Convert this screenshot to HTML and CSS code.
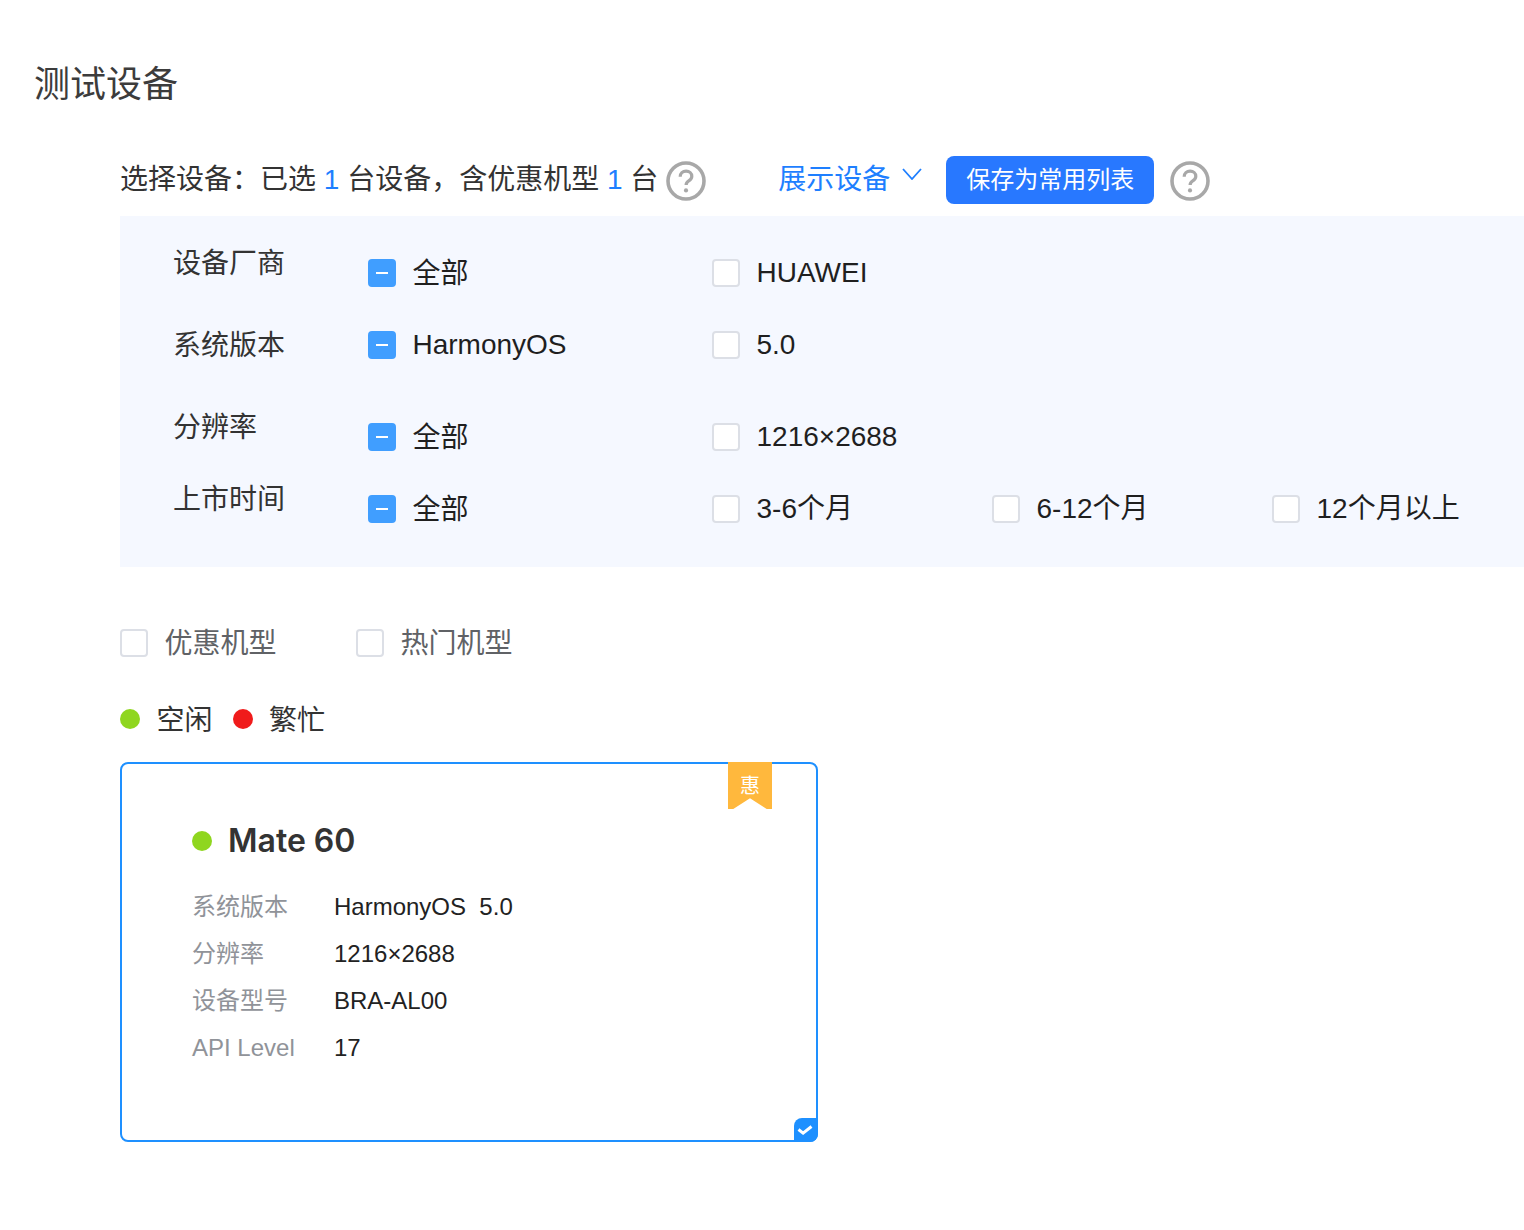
FILE: index.html
```html
<!DOCTYPE html>
<html lang="zh-CN">
<head>
    <meta charset="UTF-8">
    <meta name="viewport" content="width=device-width, initial-scale=1.0">
    <title>测试设备</title>
    <link rel="stylesheet" href="styles.css">
</head>
<body>

    <div class="page">
        <h1 class="page-title">测试设备</h1>

        <div class="device-section">
            <div class="toolbar">
                <span class="summary">选择设备：已选 <em>1</em> 台设备，含优惠机型 <em>1</em> 台</span>
                <svg class="help-icon" viewBox="0 0 40 40"><circle cx="20" cy="20" r="18" fill="none" stroke="#a8a8a8" stroke-width="3.6"/><path d="M14.2 15.8c0-3.4 2.5-5.6 5.9-5.6s5.7 2.1 5.7 5c0 2.3-1.3 3.5-3 4.6-1.7 1.2-2.7 2.2-2.7 4.2" fill="none" stroke="#a8a8a8" stroke-width="3.2"/><circle cx="20" cy="29.4" r="2.1" fill="#a8a8a8"/></svg>
                <span class="show-devices">展示设备</span>
                <svg class="chevron" viewBox="0 0 20 12"><path d="M1 1l9 10 9-10" fill="none" stroke="#1e7fff" stroke-width="1.8"/></svg>
                <button class="btn-save">保存为常用列表</button>
                <svg class="help-icon help-last" viewBox="0 0 40 40"><circle cx="20" cy="20" r="18" fill="none" stroke="#a8a8a8" stroke-width="3.6"/><path d="M14.2 15.8c0-3.4 2.5-5.6 5.9-5.6s5.7 2.1 5.7 5c0 2.3-1.3 3.5-3 4.6-1.7 1.2-2.7 2.2-2.7 4.2" fill="none" stroke="#a8a8a8" stroke-width="3.2"/><circle cx="20" cy="29.4" r="2.1" fill="#a8a8a8"/></svg>
            </div>

            <div class="filter-panel">
                <div class="filter-row offset">
                    <div class="filter-label">设备厂商</div>
                    <div class="option first"><span class="check mixed"></span><span class="cjk">全部</span></div>
                    <div class="option"><span class="check"></span>HUAWEI</div>
                </div>
                <div class="filter-row">
                    <div class="filter-label">系统版本</div>
                    <div class="option first"><span class="check mixed"></span>HarmonyOS</div>
                    <div class="option"><span class="check"></span>5.0</div>
                </div>
                <div class="filter-row short offset">
                    <div class="filter-label">分辨率</div>
                    <div class="option first"><span class="check mixed"></span><span class="cjk">全部</span></div>
                    <div class="option"><span class="check"></span>1216×2688</div>
                </div>
                <div class="filter-row last offset">
                    <div class="filter-label">上市时间</div>
                    <div class="option first"><span class="check mixed"></span><span class="cjk">全部</span></div>
                    <div class="option"><span class="check"></span>3-6个月</div>
                    <div class="option"><span class="check"></span>6-12个月</div>
                    <div class="option"><span class="check"></span>12个月以上</div>
                </div>
            </div>

            <div class="quick-filters">
                <div class="option quick"><span class="check"></span><span class="cjk">优惠机型</span></div>
                <div class="option quick"><span class="check"></span><span class="cjk">热门机型</span></div>
            </div>

            <div class="legend">
                <span class="dot free"></span><span class="legend-text">空闲</span>
                <span class="dot busy"></span><span class="legend-text">繁忙</span>
            </div>

            <div class="device-card">
                <div class="ribbon">惠</div>
                <div class="device-name"><span class="dot free"></span>Mate 60</div>
                <div class="spec"><span class="spec-key">系统版本</span><span class="spec-value">HarmonyOS&nbsp; 5.0</span></div>
                <div class="spec"><span class="spec-key">分辨率</span><span class="spec-value">1216×2688</span></div>
                <div class="spec"><span class="spec-key">设备型号</span><span class="spec-value">BRA-AL00</span></div>
                <div class="spec"><span class="spec-key">API Level</span><span class="spec-value">17</span></div>
                <div class="card-check">
                    <svg viewBox="0 0 24 24"><path d="M4.5 11.5l4.6 3.6 8.4-6.6" fill="none" stroke="#fff" stroke-width="3"/></svg>
                </div>
            </div>
        </div>
    </div>

</body>
</html>
```

FILE: styles.css
```css
/* General */
html, body {
    margin: 0;
    padding: 0;
    background: #fff;
}

body {
    font-family: "Liberation Sans", "Noto Sans CJK SC", sans-serif;
    font-size: 28px;
    line-height: 40px;
    color: #333;
    overflow-x: hidden;
}

.page {
    height: 1230px;
    padding-top: 60px;
    box-sizing: border-box;
}

.page-title {
    margin: 0 0 46px 34px;
    font-size: 36px;
    line-height: 50px;
    font-weight: 400;
    color: #3c3c3c;
}

.device-section {
    margin-left: 120px;
}

/* Toolbar */
.toolbar {
    display: flex;
    align-items: flex-start;
    height: 60px;
    line-height: 48px;
}

.summary em {
    font-style: normal;
    color: #1e7fff;
}

.help-icon {
    width: 40px;
    height: 40px;
    margin: 5px 0 0 8px;
    flex-shrink: 0;
}

.help-last {
    margin-left: 16px;
}

.show-devices {
    margin-left: 72px;
    color: #1e7fff;
}

.chevron {
    width: 20px;
    height: 12px;
    margin: 12px 24px 0 12px;
}

.btn-save {
    width: 208px;
    height: 48px;
    padding: 0;
    border: none;
    border-radius: 8px;
    background-color: #2878ff;
    color: #fff;
    font-family: inherit;
    font-size: 24px;
    line-height: 48px;
}

/* Filter panel */
.filter-panel {
    padding: 27px 0 0 53px;
    background-color: #f5f8ff;
    height: 351px;
    box-sizing: border-box;
}

.filter-row {
    display: flex;
    align-items: flex-start;
    height: 82px;
}

.filter-row.short {
    height: 72px;
}

.filter-row.last {
    height: 70px;
}

.filter-row.offset .option {
    margin-top: 10px;
}

.filter-label {
    width: 195px;
    flex-shrink: 0;
    line-height: 42px;
}

.option {
    display: flex;
    align-items: center;
    width: 280px;
    height: 40px;
    flex-shrink: 0;
    color: #1f1f1f;
}

.option.first {
    width: 344px;
}

/* chinese-only labels sit a little high otherwise */
.cjk {
    padding-top: 2px;
}

.check {
    position: relative;
    width: 28px;
    height: 28px;
    margin-right: 16.5px;
    border: 2px solid #dcdfe6;
    border-radius: 4px;
    background-color: #fff;
    box-sizing: border-box;
    flex-shrink: 0;
}

.check.mixed {
    border-color: #409eff;
    background-color: #409eff;
}

.check.mixed::after {
    content: '';
    position: absolute;
    left: 6px;
    top: 11px;
    width: 12px;
    height: 2px;
    background-color: #fff;
}

/* Quick filters and legend */
.quick-filters {
    display: flex;
    margin-top: 56px;
}

.option.quick {
    width: 236px;
    color: #606266;
}

.legend {
    display: flex;
    align-items: center;
    height: 40px;
    margin-top: 36px;
}

.dot {
    display: inline-block;
    width: 20px;
    height: 20px;
    border-radius: 50%;
    flex-shrink: 0;
}

.dot.free {
    background-color: #8fd61f;
}

.dot.busy {
    background-color: #f01b1b;
}

.legend-text {
    margin: 0 20px 0 16.5px;
    padding-top: 4px;
    color: #333;
}

/* Device card */
.device-card {
    position: relative;
    width: 698px;
    height: 380px;
    margin-top: 23px;
    padding: 54px 0 0 70px;
    border: 2px solid #1e90ff;
    border-radius: 8px;
    box-sizing: border-box;
}

.ribbon {
    position: absolute;
    top: -2px;
    right: 44px;
    width: 44px;
    height: 47px;
    background-color: #ffb83d;
    color: #fff;
    font-size: 20px;
    line-height: 48px;
    text-align: center;
    clip-path: polygon(0 0, 100% 0, 100% 100%, 88% 100%, 50% 77%, 12% 100%, 0 100%);
}

.device-name {
    display: flex;
    align-items: center;
    height: 46px;
    margin-bottom: 19px;
    font-family: Inter, "Liberation Sans", sans-serif;
    font-size: 32px;
    font-weight: 600;
    color: #333;
}

.device-name .dot {
    margin-right: 16px;
}

.spec {
    display: flex;
    height: 47px;
    font-size: 24px;
    line-height: 47px;
}

.spec-key {
    width: 142px;
    color: #909399;
}

.spec-value {
    color: #222;
}

.card-check {
    position: absolute;
    right: -2px;
    bottom: -2px;
    width: 24px;
    height: 24px;
    border-radius: 8px 0 8px 0;
    background-color: #1e90ff;
}

.card-check svg {
    display: block;
    width: 24px;
    height: 24px;
}
```
